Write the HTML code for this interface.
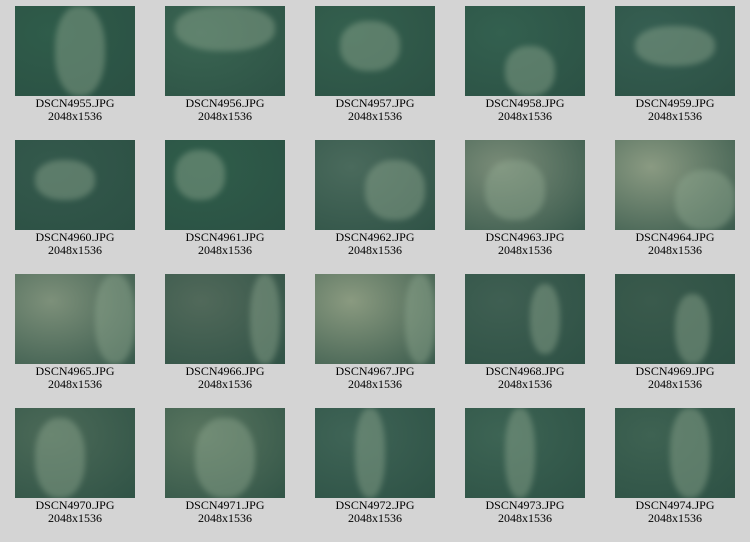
<!DOCTYPE html>
<html><head><meta charset="utf-8"><style>
html,body{margin:0;padding:0;width:750px;height:542px;background:#d4d4d4;overflow:hidden}
.c{position:absolute;width:150px;text-align:center;font-family:"Liberation Serif",serif;font-size:12px;line-height:13px;color:#000}
.i{width:120px;height:90px;margin:0 auto 1px;position:relative;overflow:hidden}
.i i{position:absolute;border-radius:45%;opacity:.45;filter:blur(3px)}
</style></head><body>
<div id="g"></div>
<script>
var bg=[
["#2f5c4a","#3a6552","#34604e","#33604f","#365f52"],
["#34594c","#2f5d4a","#4a6a5c","#7a8c78","#8a9a82"],
["#7d907a","#51695a","#8a9a80","#3f5f52","#3a5a4c"],
["#4c6a58","#5a7660","#3f6456","#3d6454","#3e6252"]];
var patch=[
[[40,0,50,90],[10,0,100,45],[25,15,60,50],[40,40,50,50],[20,20,80,40]],
[[20,20,60,40],[10,10,50,50],[50,20,60,60],[20,20,60,60],[60,30,60,60]],
[[80,0,40,90],[85,0,30,90],[90,0,30,90],[65,10,30,70],[60,20,35,70]],
[[20,10,50,80],[30,10,60,80],[40,0,30,90],[40,0,30,90],[55,0,40,90]]];
var h='',n=4955,ys=[6,140,274,408];
for(var r=0;r<4;r++)for(var c=0;c<5;c++){
var p=patch[r][c],b=bg[r][c];
h+='<div class="c" style="left:'+(c*150)+'px;top:'+ys[r]+'px"><div class="i" style="background:radial-gradient(ellipse at 30% 30%,'+b+',#2a4e42 120%)"><i style="left:'+p[0]+'px;top:'+p[1]+'px;width:'+p[2]+'px;height:'+p[3]+'px;background:#8fa890"></i></div>DSCN'+(n++)+'.JPG<br>2048x1536</div>';}
document.getElementById('g').innerHTML=h;
</script>
</body></html>
